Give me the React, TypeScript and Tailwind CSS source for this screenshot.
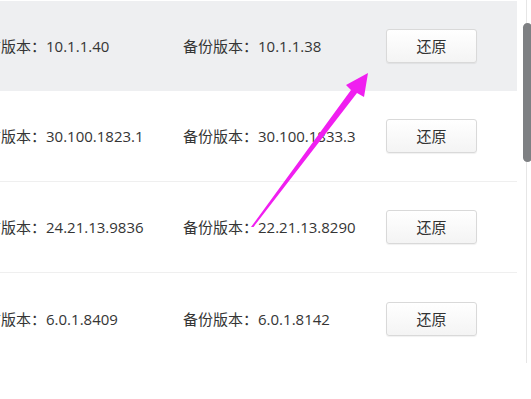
const rows = [
  { current: "10.1.1.40", backup: "10.1.1.38", active: true },
  { current: "30.100.1823.1", backup: "30.100.1833.3" },
  { current: "24.21.13.9836", backup: "22.21.13.8290" },
  { current: "6.0.1.8409", backup: "6.0.1.8142" },
];

const font = { fontFamily: '"Open Sans", "Noto Sans CJK SC", sans-serif' };

function VersionRow({ current, backup, active, last }: { current: string; backup: string; active?: boolean; last?: boolean }) {
  return (
    <div
      className={`flex items-center text-[15px] text-[#353535] ${
        active ? "h-[90px] bg-[#eeeff1]" : "bg-white"
      } ${!active && !last ? "h-[91px] border-b border-[#efefef]" : ""} ${last ? "h-[92px]" : ""}`}
    >
      <div className="w-[183px] shrink-0 overflow-visible whitespace-nowrap">
        <span className="-ml-[29px] inline-block">当前版本：{current}</span>
      </div>
      <div className="w-[203px] shrink-0 whitespace-nowrap">备份版本：{backup}</div>
      <button className="h-[34px] w-[91px] rounded-[3px] border border-[#d9d9d9] bg-gradient-to-b from-white to-[#f4f4f4] text-[15px] text-[#333] shadow-[0_1px_1px_rgba(0,0,0,0.06)]">
        还原
      </button>
    </div>
  );
}

export default function App() {
  return (
    <div className="relative flex h-[399px] w-[531px] overflow-hidden bg-white" style={font}>
      <div className="w-[517px] shrink-0 pt-[1px]">
        {rows.map((r, i) => (
          <VersionRow key={r.current} {...r} last={i === rows.length - 1} />
        ))}
      </div>
      <div className="relative flex-1 pl-[6px]">
        <div className="absolute left-[9px] top-0 h-[363px] w-[1px] bg-[#e6e6e6]" />
        <div className="relative mt-[23px] h-[139px] w-[9px] rounded-full bg-[#7e8083]" />
      </div>
      <svg className="pointer-events-none absolute left-0 top-0" width="531" height="399" viewBox="0 0 531 399">
        <polygon
          points="251,227 351,90 346,85 368,73 364,97 357,93 253.5,227"
          fill="#f01ff0"
        />
      </svg>
    </div>
  );
}
